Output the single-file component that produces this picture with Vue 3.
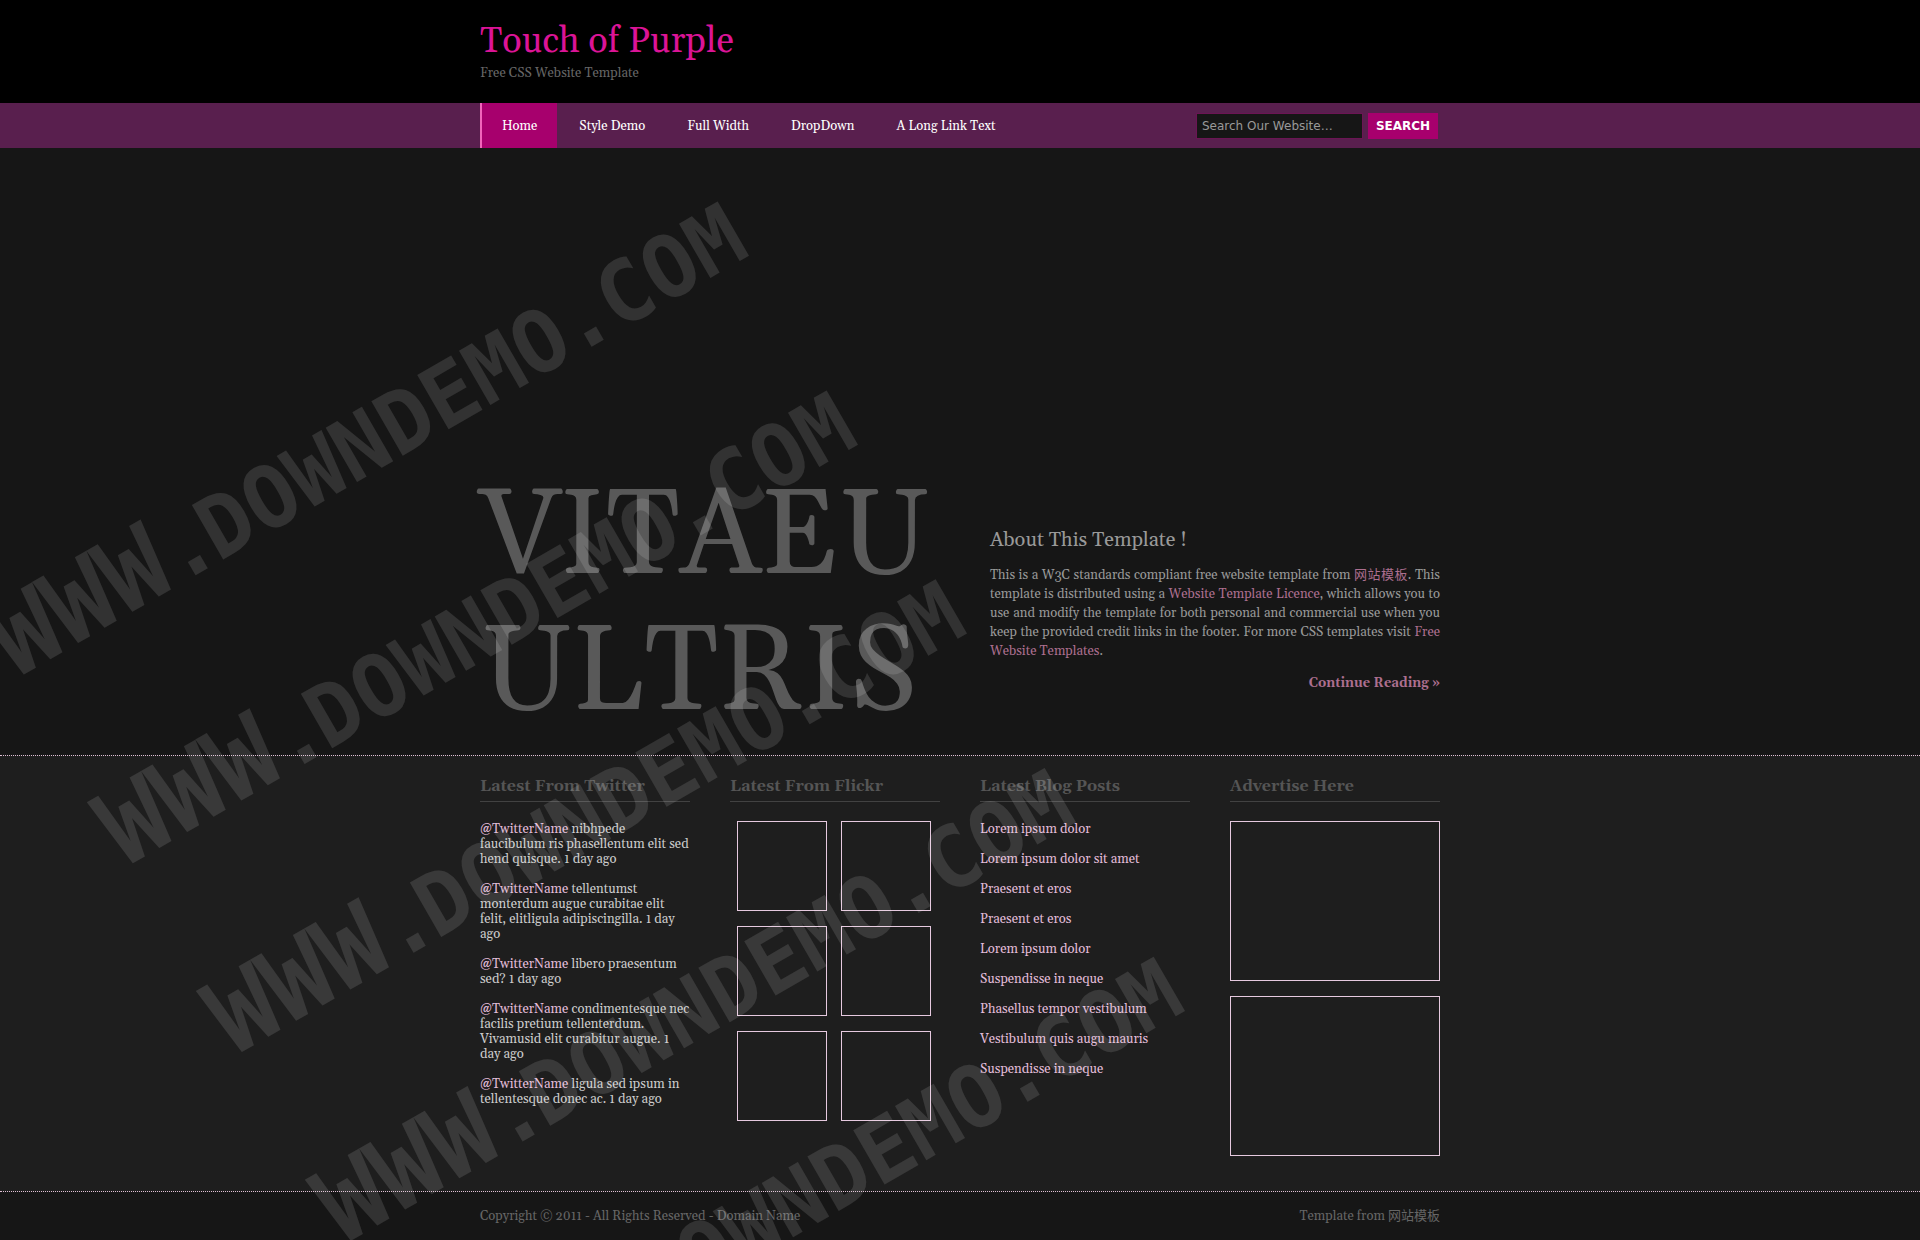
<script setup>
const nav = ['Home', 'Style Demo', 'Full Width', 'DropDown', 'A Long Link Text']
const tweets = [
  'nibhpede faucibulum ris phasellentum elit sed hend quisque. 1 day ago',
  'tellentumst monterdum augue curabitae elit felit, elitligula adipiscingilla. 1 day ago',
  'libero praesentum sed? 1 day ago',
  'condimentesque nec facilis pretium tellenterdum. Vivamusid elit curabitur augue. 1 day ago',
  'ligula sed ipsum in tellentesque donec ac. 1 day ago'
]
const posts = [
  'Lorem ipsum dolor',
  'Lorem ipsum dolor sit amet',
  'Praesent et eros',
  'Praesent et eros',
  'Lorem ipsum dolor',
  'Suspendisse in neque',
  'Phasellus tempor vestibulum',
  'Vestibulum quis augu mauris',
  'Suspendisse in neque'
]
const stamps = [596, 814, 1032, 1250, 1468]
</script>

<template>
  <div class="page">
    <header class="top">
      <div class="wrap">
        <h1><a href="#">Touch of Purple</a></h1>
        <p>Free CSS Website Template</p>
      </div>
    </header>

    <div class="bar">
      <div class="wrap bar-row">
        <nav>
          <ul>
            <li v-for="(item, i) in nav" :key="item" :class="{ active: i === 0 }">
              <a href="#">{{ item }}</a>
            </li>
          </ul>
        </nav>
        <form class="search" @submit.prevent>
          <input type="text" value="Search Our Website…" aria-label="Search our website" />
          <button type="submit">SEARCH</button>
        </form>
      </div>
    </div>

    <main class="hero">
      <div class="wrap hero-row">
        <div class="banner">VITAEU ULTRIS</div>
        <section class="about">
          <h2>About This Template !</h2>
          <p>
            This is a W3C standards compliant free website template from <a href="#">网站模板</a>. This
            template is distributed using a <a href="#">Website Template Licence</a>, which allows you to
            use and modify the template for both personal and commercial use when you keep the provided
            credit links in the footer. For more CSS templates visit <a href="#">Free Website Templates</a>.
          </p>
          <p class="more"><a href="#">Continue Reading »</a></p>
        </section>
      </div>
    </main>

    <div class="lower">
      <div class="wrap columns">
        <section>
          <h2>Latest From Twitter</h2>
          <ul class="tweets">
            <li v-for="t in tweets" :key="t"><a href="#">@TwitterName</a> {{ t }}</li>
          </ul>
        </section>
        <section>
          <h2>Latest From Flickr</h2>
          <ul class="photos">
            <li v-for="n in 6" :key="n"><a href="#" :aria-label="'Photo ' + n"></a></li>
          </ul>
        </section>
        <section>
          <h2>Latest Blog Posts</h2>
          <ul class="posts">
            <li v-for="(p, i) in posts" :key="i"><a href="#">{{ p }}</a></li>
          </ul>
        </section>
        <section>
          <h2>Advertise Here</h2>
          <ul class="ads">
            <li v-for="n in 2" :key="n"><a href="#" :aria-label="'Advert ' + n"></a></li>
          </ul>
        </section>
      </div>
    </div>

    <footer>
      <div class="wrap foot-row">
        <p>Copyright © 2011 - All Rights Reserved - <a href="#">Domain Name</a></p>
        <p>Template from <a href="#">网站模板</a></p>
      </div>
    </footer>

    <svg class="stamp" aria-hidden="true">
      <g transform="rotate(-30)">
        <text v-for="y in stamps" :key="y" :y="y"><tspan x="-326" class="lead">WWW</tspan><tspan x="-137">.</tspan><tspan x="-92">DOWNDEMO</tspan><tspan x="320">.</tspan><tspan x="369">COM</tspan></text>
      </g>
    </svg>
  </div>
</template>

<style>
body {
  margin: 0;
  background: #161616;
}
</style>

<style scoped>
.page {
  position: relative;
  overflow: hidden;
  background: #161616;
  color: #999;
  font-family: Georgia, Gelasio, "Liberation Serif", "Noto Sans CJK SC", serif;
  font-size: 13px;
  line-height: 15px;
}
h1, h2, p, ul {
  margin: 0;
  padding: 0;
  font-weight: normal;
}
ul {
  list-style: none;
}
a {
  color: inherit;
  text-decoration: none;
}
.wrap {
  width: 960px;
  margin: 0 auto;
}
.top {
  background: #000;
}
.top .wrap {
  padding: 22px 0;
}
.top h1 {
  color: #db1496;
  font-size: 36px;
  line-height: 40px;
}
.top p {
  color: #666;
  margin-top: 4px;
}
.bar {
  background: #591f4e;
}
.bar-row {
  display: flex;
  justify-content: space-between;
  align-items: center;
}
.bar ul {
  display: flex;
}
.bar li {
  border-left: 2px solid #591f4e;
  color: #fff;
}
.bar li.active {
  border-left-color: #f165bb;
  background: #a7006d;
}
.bar li a {
  display: block;
  padding: 16px 20px 14px;
}
.search {
  display: flex;
  align-items: center;
  gap: 5px;
  margin-right: 2px;
}
.search input,
.search button {
  box-sizing: border-box;
  margin: 0;
  border: 1px solid #a7006d;
  border-radius: 0;
  font-family: "DejaVu Sans", sans-serif;
  font-size: 12px;
}
.search input {
  width: 167px;
  height: 26px;
  padding: 1px 5px 0;
  border-color: #6b1554;
  background: #161616;
  color: #999;
}
.search button {
  width: 70px;
  height: 26px;
  padding: 1px 0 0;
  background: #a7006d;
  color: #fff;
  font-weight: bold;
}
.hero-row {
  display: flex;
  justify-content: space-between;
  align-items: flex-start;
  padding: 322px 0 13px;
}
.banner {
  width: 440px;
  margin-left: -1px;
  color: #595959;
  font-size: 120px;
  line-height: 136px;
  text-align: center;
}
.about {
  width: 450px;
  margin-top: 58px;
  line-height: 19px;
}
.about h2 {
  margin-bottom: 14px;
  font-size: 20px;
  line-height: 24px;
}
.about p {
  text-align: justify;
}
.about a {
  color: #ac6f8f;
}
.about .more {
  margin-top: 13px;
  font-weight: bold;
  text-align: right;
}
.lower {
  border-top: 1px dotted #dfbfd4;
  border-bottom: 1px dotted #dfbfd4;
  background: #1e1e1e;
  color: #ccc;
}
.columns {
  display: grid;
  grid-template-columns: repeat(4, 210px);
  gap: 40px;
  padding: 20px 0 35px;
}
.columns h2 {
  margin-bottom: 19px;
  padding-bottom: 5px;
  border-bottom: 1px solid #424242;
  color: #555;
  font-size: 16px;
  font-weight: bold;
  line-height: 20px;
}
.columns a {
  color: #e2bcd9;
}
.tweets,
.posts {
  display: flex;
  flex-direction: column;
  gap: 15px;
  padding-top: 1px;
}
.photos {
  display: grid;
  grid-template-columns: 90px 90px;
  gap: 15px 14px;
  padding-left: 7px;
}
.photos a,
.ads a {
  display: block;
  box-sizing: border-box;
  height: 90px;
  border: 1px solid #e6c9df;
}
.ads {
  display: grid;
  gap: 15px;
}
.ads a {
  height: 160px;
}
.foot-row {
  display: flex;
  justify-content: space-between;
  padding: 17px 0 16px;
  color: #666;
}
.stamp {
  position: absolute;
  inset: 0;
  width: 100%;
  height: 100%;
  pointer-events: none;
}
.stamp text {
  fill: #fff;
  fill-opacity: 0.12;
  font-family: "DejaVu Sans Mono", monospace;
  font-size: 86px;
  font-weight: bold;
}
.stamp .lead {
  font-size: 104px;
}
</style>
